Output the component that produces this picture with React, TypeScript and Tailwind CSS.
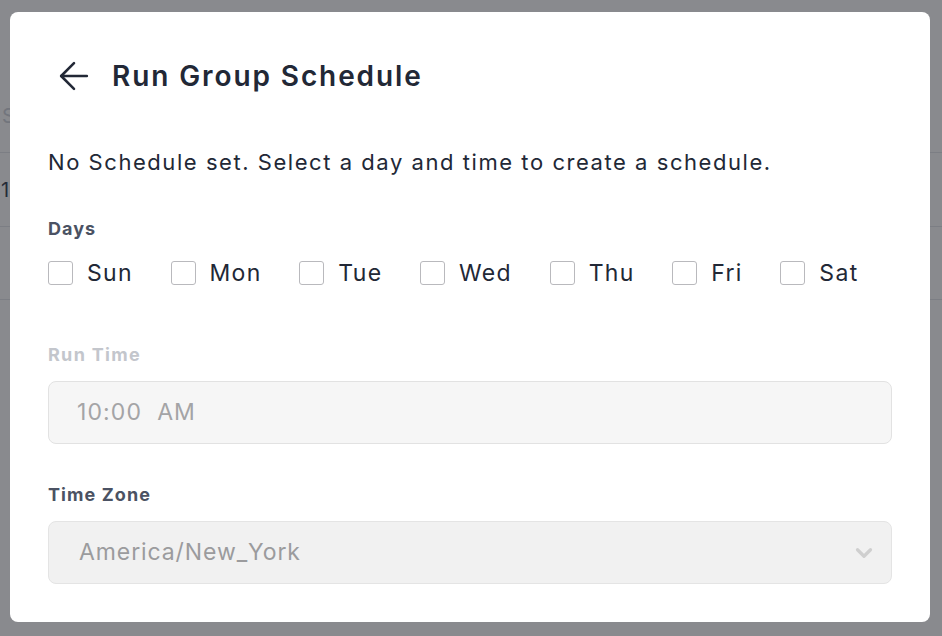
import { ChevronDown } from "lucide-react";

const days = ["Sun", "Mon", "Tue", "Wed", "Thu", "Fri", "Sat"];

function BackArrow() {
  return (
    <svg
      width="44"
      height="44"
      viewBox="0 0 24 24"
      fill="none"
      stroke="currentColor"
      strokeWidth="1.4"
      strokeLinecap="round"
      strokeLinejoin="round"
    >
      <path d="m12 19-7-7 7-7" />
      <path d="M19 12H5" />
    </svg>
  );
}

export default function App() {
  return (
    <div className="relative h-[636px] w-[942px] overflow-hidden bg-white font-['Inter',sans-serif]">
      {/* page behind the dialog */}
      <div className="flex flex-col pt-[80px] text-[20px]">
        <div className="flex h-[73px] items-center border-b border-gray-200 pl-[2px] text-gray-300">
          S
        </div>
        <div className="flex h-[74px] items-center border-b border-gray-200 pl-[1px] text-gray-700">
          1
        </div>
        <div className="h-[73px] border-b border-gray-200" />
      </div>

      {/* overlay */}
      <div className="absolute inset-0 bg-[#14161e]/50" />

      {/* dialog */}
      <div className="absolute left-[10px] top-[12px] flex h-[610px] w-[920px] flex-col rounded-lg bg-white px-[38px] pt-[42px] text-[#222836]">
        <div className="flex h-[44px] items-center">
          <div className="ml-[4px] flex items-center text-[#222836]">
            <BackArrow />
          </div>
          <h1 className="ml-[16px] text-[28px] font-semibold tracking-[1.9px]">
            Run Group Schedule
          </h1>
        </div>

        <p className="mt-[50px] text-[22px] leading-[28px] tracking-[1.55px]">
          No Schedule set. Select a day and time to create a schedule.
        </p>

        <div className="mt-[42px] text-[18px] font-bold leading-[22px] tracking-[1px] text-[#4b5263]">
          Days
        </div>
        <div className="mt-[19px] flex items-center gap-[37.7px]">
          {days.map((d) => (
            <label key={d} className="flex items-center gap-[14px]">
              <span className="h-[24px] w-[25px] rounded-[3px] border-[1.5px] border-[#b9b9bd] bg-white" />
              <span className="text-[23px] leading-[28px] tracking-[1.3px]">{d}</span>
            </label>
          ))}
        </div>

        <div className="mt-[57px] text-[18px] font-bold leading-[22px] tracking-[1.3px] text-[#c3c6cc]">
          Run Time
        </div>
        <div className="mt-[15px] flex h-[63px] items-center rounded-lg border-[1.5px] border-[#e2e2e2] bg-[#f6f6f6] pl-[28px] text-[23px] tracking-[1.1px] text-[#a4a4a6]">
          10:00&nbsp;&nbsp;AM
        </div>

        <div className="mt-[40px] text-[18px] font-bold leading-[22px] tracking-[1.1px] text-[#4b5263]">
          Time Zone
        </div>
        <div className="mt-[15px] flex h-[63px] items-center justify-between rounded-lg border-[1.5px] border-[#e4e4e4] bg-[#f1f1f1] pl-[30px] pr-[14px] text-[23px] tracking-[0.9px] text-[#9b9b9d]">
          <span>America/New_York</span>
          <ChevronDown size={26} strokeWidth={3} className="text-[#cfcfcf]" />
        </div>
      </div>
    </div>
  );
}
